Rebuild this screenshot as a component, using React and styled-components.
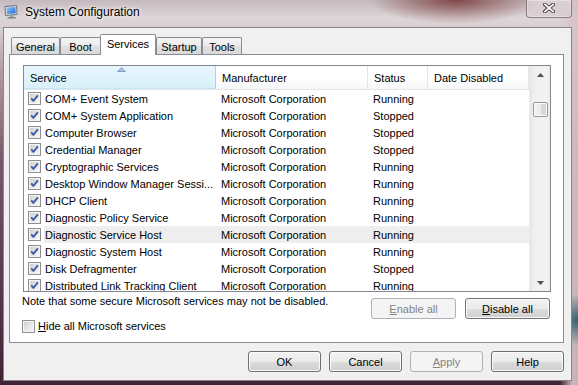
import React from 'react';
import styled, { createGlobalStyle, css } from 'styled-components';

const Global = createGlobalStyle`
  html, body { margin: 0; padding: 0; }
  body {
    width: 578px; height: 385px; overflow: hidden;
    font-family: "Liberation Sans", Arial, sans-serif;
    font-size: 11px; color: #000;
  }
  * { box-sizing: border-box; }
`;

const Window = styled.div`
  width: 578px;
  height: 385px;
  display: flex;
  flex-direction: column;
  padding: 0 6px 4px 3px;
  background:
    radial-gradient(ellipse 85px 24px at 455px 0px, rgba(105, 35, 35, 0.75), rgba(105, 35, 35, 0) 100%),
    radial-gradient(ellipse 30px 26px at 578px 320px, rgba(40, 95, 105, 0.95), rgba(40, 95, 105, 0) 100%),
    linear-gradient(to right, rgba(0,0,0,0) 560px, rgba(215, 195, 200, 0.9) 572px),
    linear-gradient(to bottom, #c5b9bd 0px, #ddd5d8 18px, #d6cccf 30px, #b39ba5 70px, #7a566a 160px, #5b3a4e 280px, #3e2434 385px);
`;

const TitleBar = styled.div`
  height: 27px;
  display: flex;
  align-items: flex-start;
  flex-shrink: 0;
`;

const AppIconWrap = styled.div`
  width: 15px;
  height: 14px;
  margin: 5px 0 0 1px;
  display: flex;
`;

const Title = styled.div`
  margin: 5px 0 0 6px;
  font-size: 12px;
  line-height: 14px;
  color: #000;
  text-shadow: 0 0 6px rgba(255,255,255,0.95), 0 0 3px rgba(255,255,255,0.9);
`;

const CloseButton = styled.div`
  margin-left: auto;
  width: 46px;
  height: 18px;
  border: 1px solid rgba(70, 50, 60, 0.55);
  border-top: none;
  border-radius: 0 0 4px 4px;
  background: linear-gradient(to bottom, rgba(235, 225, 228, 0.55), rgba(215, 200, 205, 0.35));
  box-shadow: inset 0 0 0 1px rgba(255,255,255,0.35);
  display: flex;
  align-items: center;
  justify-content: center;
  padding-bottom: 2px;
`;

const Client = styled.div`
  flex: 1;
  background: #f0f0f0;
  border: 1px solid #8d8489;
  display: flex;
  flex-direction: column;
  padding: 6px 7px 0 5px;
`;

const TabStrip = styled.div`
  display: flex;
  align-items: flex-end;
  height: 20px;
  padding-left: 2px;
  position: relative;
  z-index: 1;
`;

const Tab = styled.div`
  width: ${p => p.$w}px;
  height: 17px;
  margin-left: ${p => p.$ml || 0}px;
  border: 1px solid #898c95;
  border-bottom: none;
  border-radius: 2px 2px 0 0;
  background: linear-gradient(to bottom, #f4f4f4 0%, #ececec 45%, #e0e0e0 55%, #d9d9d9 100%);
  display: flex;
  align-items: center;
  justify-content: center;
  padding-top: 1px;
  white-space: nowrap;
  ${p => p.$active && css`
    height: 21px;
    margin-bottom: -1px;
    background: #ffffff;
    padding-top: 0;
    padding-bottom: 3px;
  `}
`;

const Panel = styled.div`
  width: 555px;
  height: 289px;
  border: 1px solid #898c95;
  background: #ffffff;
  padding: 10px 12px 0 13px;
  display: flex;
  flex-direction: column;
`;

const ListView = styled.div`
  width: 528px;
  height: 227px;
  border: 1px solid #828790;
  background: #fff;
  display: flex;
  overflow: hidden;
`;

const ListMain = styled.div`
  width: 505px;
  display: flex;
  flex-direction: column;
  overflow: hidden;
`;

const Header = styled.div`
  display: flex;
  height: 24px;
  flex-shrink: 0;
  border-bottom: 1px solid #e5e5e5;
  background: linear-gradient(to bottom, #ffffff 0%, #ffffff 50%, #f6f7f9 100%);
`;

const HeaderCell = styled.div`
  position: relative;
  width: ${p => p.$w}px;
  flex-shrink: 0;
  padding-left: 6px;
  display: flex;
  align-items: center;
  border-right: 1px solid #e3e5e8;
  white-space: nowrap;
  ${p => p.$sorted && css`
    background: linear-gradient(to bottom, #e8f6fd 0%, #e1f3fc 50%, #d9effa 100%);
    border-right: 1px solid #a2d5f1;
    box-shadow: inset 0 -1px 0 #c5e6f8;
  `}
`;

const SortArrow = styled.svg`
  position: absolute;
  top: 1px;
  left: 93px;
`;

const Row = styled.div`
  display: flex;
  height: 17px;
  flex-shrink: 0;
`;

const CheckCell = styled.div`
  width: 20px;
  flex-shrink: 0;
  display: flex;
  align-items: center;
  padding-left: 4px;
`;

const RowBody = styled.div`
  display: flex;
  flex: 1;
  background: ${p => (p.$hot ? '#eeeeee' : 'transparent')};
`;

const Cell = styled.div`
  width: ${p => p.$w}px;
  flex-shrink: 0;
  padding-left: ${p => p.$pl}px;
  display: flex;
  align-items: center;
  white-space: nowrap;
  overflow: hidden;
`;

const Scrollbar = styled.div`
  width: 21px;
  display: flex;
  flex-direction: column;
  align-items: center;
  background: linear-gradient(to right, #e6e6e6 0%, #efefef 20%, #f2f2f2 80%, #ebebeb 100%);
  border-left: 1px solid #ebebeb;
`;

const ScrollArrow = styled.div`
  height: 17px;
  width: 100%;
  display: flex;
  align-items: center;
  justify-content: center;
  flex-shrink: 0;
`;

const ScrollTrack = styled.div`
  flex: 1;
  width: 100%;
  display: flex;
  justify-content: center;
`;

const ScrollThumb = styled.div`
  margin-top: 19px;
  width: 15px;
  height: 15px;
  border: 1px solid #979797;
  border-radius: 2px;
  background: linear-gradient(to right, #f6f6f6 0%, #eaeaea 50%, #dcdcdc 51%, #d4d4d4 100%);
  box-shadow: inset 0 0 0 1px #fafafa;
`;

const Footer = styled.div`
  margin-top: 6px;
  display: grid;
  grid-template-columns: 1fr 85px 85px;
  grid-template-rows: 21px 13px;
  column-gap: 9px;
  row-gap: 1px;
  padding-right: 1px;
`;

const Note = styled.div`
  align-self: start;
  margin: -4px 0 0 -1px;
  line-height: 14px;
  white-space: nowrap;
`;

const CheckLabel = styled.label`
  grid-column: 1 / 2;
  display: flex;
  align-items: center;
  margin-left: -1px;
  gap: 3px;
  line-height: 13px;
  white-space: nowrap;
`;

const Button = styled.div`
  width: ${p => p.$w || 73}px;
  height: 21px;
  border: 1px solid #707070;
  border-radius: 3px;
  background: linear-gradient(to bottom, #f2f2f2 0%, #ebebeb 50%, #dddddd 51%, #cfcfcf 100%);
  box-shadow: inset 0 0 0 1px #fbfbfb;
  display: flex;
  align-items: center;
  justify-content: center;
  color: #000;
  white-space: nowrap;
  ${p => p.$disabled && css`
    border-color: #adb2b5;
    background: #f4f4f4;
    box-shadow: none;
    color: #838383;
  `}
`;

const U = styled.span`
  text-decoration: underline;
  text-underline-offset: 1px;
`;

const ButtonRow = styled.div`
  margin-top: 8px;
  display: flex;
  justify-content: flex-end;
  gap: 8px;
`;

const AppIcon = () => (
  <svg width="15" height="14" viewBox="0 0 15 14">
    <defs>
      <linearGradient id="scr" x1="0" y1="0" x2="1" y2="1">
        <stop offset="0" stopColor="#8fd0ff" />
        <stop offset="1" stopColor="#1b63c9" />
      </linearGradient>
    </defs>
    <path d="M1 1.5 L12.5 0.5 L13 9.5 L1.5 10.5 Z" fill="#d9dde4" stroke="#5d6878" strokeWidth="0.9" />
    <path d="M2.6 2.6 L11.3 1.9 L11.7 8.3 L3 9 Z" fill="url(#scr)" />
    <path d="M6 10.5 L6.5 12 L4 12.8 L11 12.6 L9 11.8 L8.8 10.2 Z" fill="#8a93a2" />
    <path d="M3.5 13 L12 12.8" stroke="#5d6878" strokeWidth="1" />
  </svg>
);

const CloseX = () => (
  <svg width="12" height="10" viewBox="0 0 12 10">
    <path d="M2 1.5 L10 8.5 M10 1.5 L2 8.5" stroke="#3a3138" strokeWidth="3.6" strokeLinecap="square" />
    <path d="M2 1.5 L10 8.5 M10 1.5 L2 8.5" stroke="#ffffff" strokeWidth="1.8" strokeLinecap="square" />
  </svg>
);

const CheckBox = ({ checked }) => (
  <svg width="13" height="13" viewBox="0 0 13 13" style={{ flexShrink: 0 }}>
    <defs>
      <linearGradient id="cbg" x1="0" y1="0" x2="1" y2="1">
        <stop offset="0" stopColor="#cfd1d6" />
        <stop offset="1" stopColor="#f7f7f7" />
      </linearGradient>
    </defs>
    <rect x="0.5" y="0.5" width="12" height="12" fill="#f4f4f4" stroke="#8e8f8f" />
    <rect x="2" y="2" width="9" height="9" fill="url(#cbg)" />
    {checked && (
      <path d="M3.2 6.4 L5.4 8.9 L9.9 3.4" fill="none" stroke="#3f5a9e" strokeWidth="1.9" />
    )}
  </svg>
);

const Arrow = ({ up }) => (
  <svg width="7" height="4" viewBox="0 0 7 4">
    <path d={up ? 'M0 4 L3.5 0 L7 4 Z' : 'M0 0 L3.5 4 L7 0 Z'} fill="#4f4f4f" />
  </svg>
);

const services = [
  ['COM+ Event System', 'Running'],
  ['COM+ System Application', 'Stopped'],
  ['Computer Browser', 'Stopped'],
  ['Credential Manager', 'Stopped'],
  ['Cryptographic Services', 'Running'],
  ['Desktop Window Manager Sessi...', 'Running'],
  ['DHCP Client', 'Running'],
  ['Diagnostic Policy Service', 'Running'],
  ['Diagnostic Service Host', 'Running'],
  ['Diagnostic System Host', 'Running'],
  ['Disk Defragmenter', 'Stopped'],
  ['Distributed Link Tracking Client', 'Running'],
];

export default function App() {
  return (
    <>
      <Global />
      <Window>
        <TitleBar>
          <AppIconWrap><AppIcon /></AppIconWrap>
          <Title>System Configuration</Title>
          <CloseButton><CloseX /></CloseButton>
        </TitleBar>
        <Client>
          <TabStrip>
            <Tab $w={49}>General</Tab>
            <Tab $w={41} $ml={0}>Boot</Tab>
            <Tab $w={56} $ml={-1} $active>Services</Tab>
            <Tab $w={46}>Startup</Tab>
            <Tab $w={40}>Tools</Tab>
          </TabStrip>
          <Panel>
            <ListView>
              <ListMain>
                <Header>
                  <HeaderCell $w={192} $sorted>
                    <SortArrow width="9" height="5" viewBox="0 0 9 5">
                      <path d="M0.5 4.5 L4.5 0.5 L8.5 4.5 Z" fill="#a8c3da" stroke="#6f93b5" strokeWidth="0.8" />
                    </SortArrow>
                    Service
                  </HeaderCell>
                  <HeaderCell $w={152}>Manufacturer</HeaderCell>
                  <HeaderCell $w={60}>Status</HeaderCell>
                  <HeaderCell $w={101}>Date Disabled</HeaderCell>
                </Header>
                {services.map(([name, status], i) => (
                  <Row key={name}>
                    <CheckCell><CheckBox checked /></CheckCell>
                    <RowBody $hot={i === 8}>
                      <Cell $w={172} $pl={1}>{name}</Cell>
                      <Cell $w={152} $pl={5}>Microsoft Corporation</Cell>
                      <Cell $w={60} $pl={5}>{status}</Cell>
                      <Cell $w={101} $pl={5}></Cell>
                    </RowBody>
                  </Row>
                ))}
              </ListMain>
              <Scrollbar>
                <ScrollArrow><Arrow up /></ScrollArrow>
                <ScrollTrack><ScrollThumb /></ScrollTrack>
                <ScrollArrow><Arrow /></ScrollArrow>
              </Scrollbar>
            </ListView>
            <Footer>
              <Note>Note that some secure Microsoft services may not be disabled.</Note>
              <Button $w={85} $disabled><U>E</U>nable all</Button>
              <Button $w={85}><U>D</U>isable all</Button>
              <CheckLabel>
                <CheckBox />
                <span><U>H</U>ide all Microsoft services</span>
              </CheckLabel>
            </Footer>
          </Panel>
          <ButtonRow>
            <Button>OK</Button>
            <Button>Cancel</Button>
            <Button $disabled><U>A</U>pply</Button>
            <Button>Help</Button>
          </ButtonRow>
        </Client>
      </Window>
    </>
  );
}
